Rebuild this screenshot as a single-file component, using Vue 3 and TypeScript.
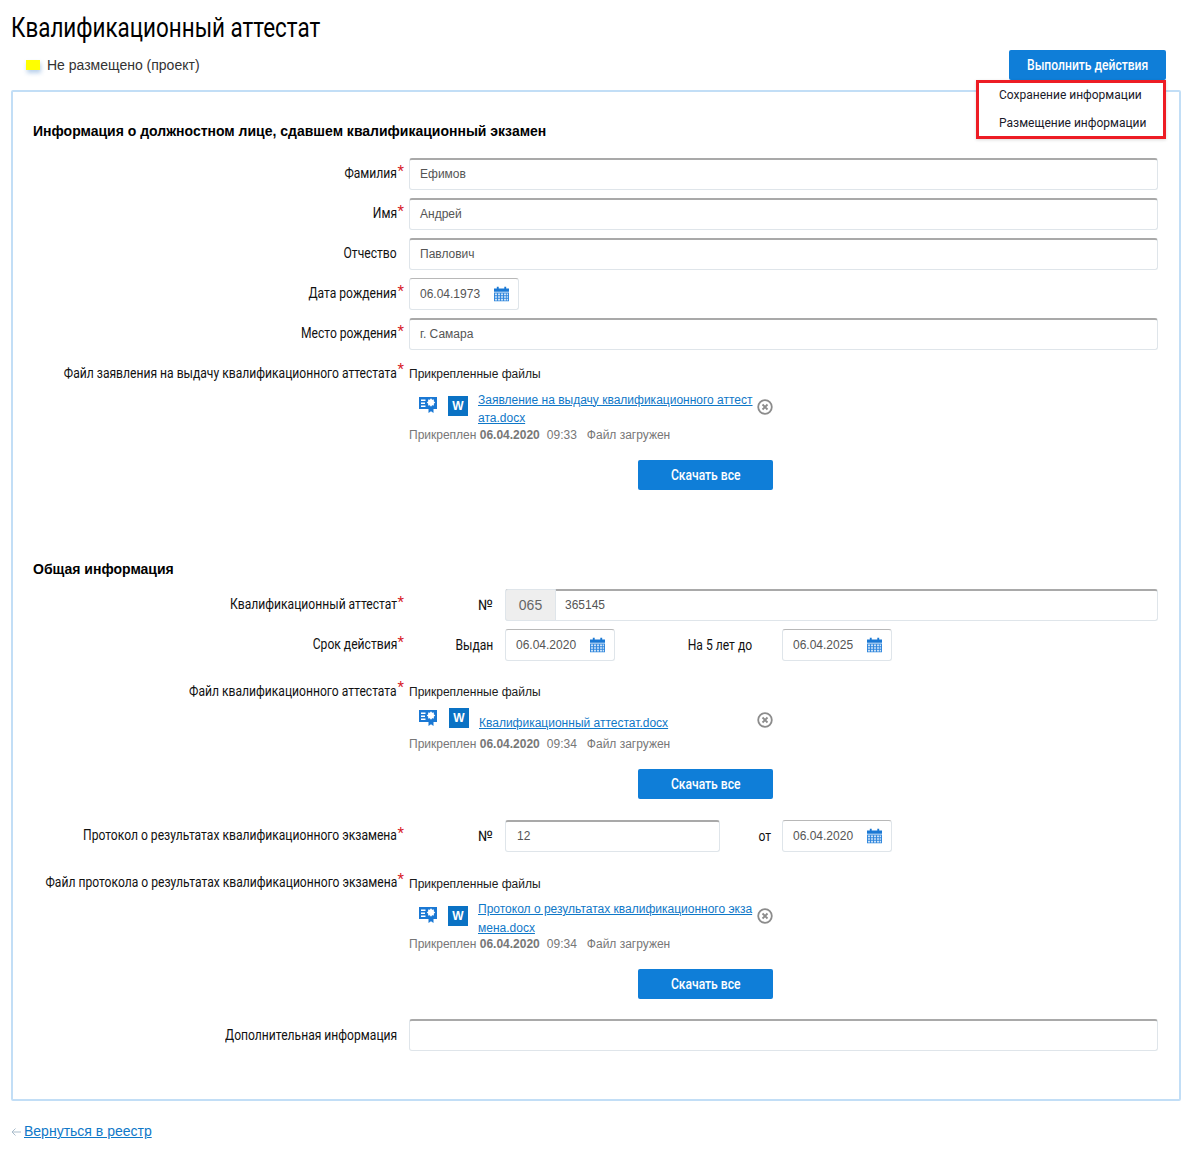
<template>
  <div class="page">
    <h1 class="title"><span class="cn left">Квалификационный аттестат</span></h1>
    <div class="status-bar">
      <div class="status">
        <span class="status-mark"></span>
        <span>Не размещено (проект)</span>
      </div>
      <div class="actions">
        <button class="btn btn-actions"><span class="cn">Выполнить действия</span></button>
        <ul class="menu">
          <li>Сохранение информации</li>
          <li>Размещение информации</li>
        </ul>
      </div>
    </div>

    <div class="panel">
      <h2 class="section-title first">Информация о должностном лице, сдавшем квалификационный экзамен</h2>

      <div class="rows">
        <div class="row">
          <label class="label"><span class="cn right">Фамилия</span><i>*</i></label>
          <div class="input">Ефимов</div>
        </div>
        <div class="row">
          <label class="label"><span class="cn right">Имя</span><i>*</i></label>
          <div class="input">Андрей</div>
        </div>
        <div class="row">
          <label class="label"><span class="cn right">Отчество</span></label>
          <div class="input">Павлович</div>
        </div>
        <div class="row">
          <label class="label"><span class="cn right">Дата рождения</span><i>*</i></label>
          <div class="input date">
            06.04.1973
            <svg class="cal" viewBox="0 0 16 16"><use href="#cal-icon" /></svg>
          </div>
        </div>
        <div class="row">
          <label class="label"><span class="cn right">Место рождения</span><i>*</i></label>
          <div class="input">г. Самара</div>
        </div>
      </div>

      <div class="row file-row first-file">
        <label class="label"><span class="cn right">Файл заявления на выдачу квалификационного аттестата</span><i>*</i></label>
        <div class="files">
          <div class="files-title">Прикрепленные файлы</div>
          <div class="file">
            <svg class="cert" viewBox="0 0 18 17"><use href="#cert-icon" /></svg>
            <span class="word">W</span>
            <a class="file-link">Заявление на выдачу квалификационного аттест<br />ата.docx</a>
            <svg class="remove" viewBox="0 0 16 16"><use href="#remove-icon" /></svg>
          </div>
          <div class="meta">
            Прикреплен <b>06.04.2020</b><span class="time">09:33</span><span class="loaded">Файл загружен</span>
          </div>
          <button class="btn btn-download"><span class="cn">Скачать все</span></button>
        </div>
      </div>

      <h2 class="section-title second">Общая информация</h2>

      <div class="rows">
        <div class="row">
          <label class="label"><span class="cn right">Квалификационный аттестат</span><i>*</i></label>
          <div class="inline">
            <span class="inline-label no">№</span>
            <div class="input number">
              <span class="prefix">065</span>
              <span class="number-value">365145</span>
            </div>
          </div>
        </div>
        <div class="row">
          <label class="label"><span class="cn right">Срок действия</span><i>*</i></label>
          <div class="inline">
            <span class="inline-label no"><span class="cn right">Выдан</span></span>
            <div class="input date">
              06.04.2020
              <svg class="cal" viewBox="0 0 16 16"><use href="#cal-icon" /></svg>
            </div>
            <span class="inline-label until"><span class="cn right">На 5 лет до</span></span>
            <div class="input date">
              06.04.2025
              <svg class="cal" viewBox="0 0 16 16"><use href="#cal-icon" /></svg>
            </div>
          </div>
        </div>
      </div>

      <div class="row file-row second-file">
        <label class="label"><span class="cn right">Файл квалификационного аттестата</span><i>*</i></label>
        <div class="files">
          <div class="files-title">Прикрепленные файлы</div>
          <div class="file single">
            <svg class="cert" viewBox="0 0 18 17"><use href="#cert-icon" /></svg>
            <span class="word">W</span>
            <a class="file-link">Квалификационный аттестат.docx</a>
            <svg class="remove" viewBox="0 0 16 16"><use href="#remove-icon" /></svg>
          </div>
          <div class="meta">
            Прикреплен <b>06.04.2020</b><span class="time">09:34</span><span class="loaded">Файл загружен</span>
          </div>
          <button class="btn btn-download"><span class="cn">Скачать все</span></button>
        </div>
      </div>

      <div class="row protocol-row">
        <label class="label"><span class="cn right">Протокол о результатах квалификационного экзамена</span><i>*</i></label>
        <div class="inline">
          <span class="inline-label no">№</span>
          <div class="input protocol-number">12</div>
          <span class="inline-label from"><span class="cn right">от</span></span>
          <div class="input date">
            06.04.2020
            <svg class="cal" viewBox="0 0 16 16"><use href="#cal-icon" /></svg>
          </div>
        </div>
      </div>

      <div class="row file-row third-file">
        <label class="label"><span class="cn right">Файл протокола о результатах квалификационного экзамена</span><i>*</i></label>
        <div class="files">
          <div class="files-title">Прикрепленные файлы</div>
          <div class="file">
            <svg class="cert" viewBox="0 0 18 17"><use href="#cert-icon" /></svg>
            <span class="word">W</span>
            <a class="file-link">Протокол о результатах квалификационного экза<br />мена.docx</a>
            <svg class="remove" viewBox="0 0 16 16"><use href="#remove-icon" /></svg>
          </div>
          <div class="meta">
            Прикреплен <b>06.04.2020</b><span class="time">09:34</span><span class="loaded">Файл загружен</span>
          </div>
          <button class="btn btn-download"><span class="cn">Скачать все</span></button>
        </div>
      </div>

      <div class="row extra-row">
        <label class="label"><span class="cn right">Дополнительная информация</span></label>
        <div class="input"></div>
      </div>
    </div>

    <div class="back">
      <svg class="back-arrow" viewBox="0 0 10 10">
        <path d="M10 5H1M4.500 1.500L1 5l3.500 3.500" fill="none" stroke="#a9bccb" stroke-width="1" />
      </svg>
      <a class="back-link">Вернуться в реестр</a>
    </div>

    <svg class="defs" width="0" height="0">
      <symbol id="cal-icon" viewBox="0 0 16 16" preserveAspectRatio="none">
        <path d="M0 2h16v3.500H0z" fill="#1a78d4" />
        <path d="M3 0h2v3H3zM11 0h2v3h-2z" fill="#1a78d4" />
        <path d="M0 6.500h16V16H0z" fill="#2f86dc" />
        <path
          d="M1 7.500h2.200v1.800H1zM4.200 7.500h2.200v1.800H4.200zM7.400 7.500h2.200v1.800H7.400zM10.600 7.500h2.200v1.800h-2.200zM13.500 7.500H15v1.800h-1.500zM1 10.300h2.200v1.800H1zM4.200 10.300h2.200v1.800H4.200zM7.400 10.300h2.200v1.800H7.400zM10.600 10.300h2.200v1.800h-2.200zM13.500 10.300H15v1.800h-1.500zM1 13.100h2.200V15H1zM4.200 13.100h2.200V15H4.200zM7.400 13.100h2.200V15H7.400zM10.600 13.100h2.200V15h-2.200zM13.500 13.100H15V15h-1.500z"
          fill="#cfe3f7"
        />
      </symbol>
      <symbol id="cert-icon" viewBox="0 0 18 17">
        <path d="M0 1h18v12H0z" fill="#1a78d4" />
        <path d="M2 3.500h4.500V5H2zM2 6.500h4V8H2zM2 9.500h4.500V11H2z" fill="#fff" />
        <path
          d="M16.200 6.500l-1.430-1.150.2-1.820-1.820.2L12 2.300l-1.150 1.430-1.820-.2.2 1.820L7.800 6.500l1.430 1.150-.2 1.820 1.820-.2L12 10.700l1.150-1.430 1.820.2-.2-1.820z"
          fill="#fff"
        />
        <path d="M9.500 13h5v4L12 15.300 9.500 17z" fill="#1a78d4" />
      </symbol>
      <symbol id="remove-icon" viewBox="0 0 16 16">
        <circle cx="8" cy="8" r="6.800" fill="none" stroke="#8c8c8c" stroke-width="1.800" />
        <path d="M5.500 5.500l5 5M10.500 5.500l-5 5" fill="none" stroke="#8c8c8c" stroke-width="1.800" />
      </symbol>
    </svg>
  </div>
</template>

<script setup lang="ts">
// static page, nothing to drive
</script>

<style>
body {
  background: #fff;
}
</style>

<style scoped>
.page {
  width: 1196px;
  height: 1169px;
  overflow: hidden;
  box-sizing: border-box;
  padding: 13px 15px 0 11px;
  font-family: "Liberation Sans", Arial, sans-serif;
  color: #000;
  background: #fff;
}

.defs {
  position: absolute;
}

/* no condensed face installed, so Roboto gets squeezed */
.cn {
  display: inline-block;
  white-space: nowrap;
  transform: scaleX(0.835);
}

.cn.left {
  transform: scaleX(0.83);
  transform-origin: left center;
}

.cn.right {
  transform-origin: right center;
}

.title {
  margin: 0;
  height: 30px;
  font-family: Roboto, sans-serif;
  font-size: 27px;
  line-height: 30px;
  font-weight: 400;
}

.status-bar {
  display: flex;
  justify-content: space-between;
  align-items: flex-start;
  padding: 7px 15px 0 15px;
  height: 47px;
  box-sizing: border-box;
}

.status {
  display: flex;
  align-items: center;
  gap: 7px;
  height: 30px;
  font-family: "Liberation Sans", sans-serif;
  font-size: 14px;
  color: #333;
}

.status-mark {
  width: 14px;
  height: 10px;
  background: #ff0;
  box-shadow: 1px 3px 4px rgba(100, 150, 210, 0.45);
}

.actions {
  position: relative;
}

.btn {
  display: block;
  border: 0;
  border-radius: 2px;
  background: #0f7ed8;
  color: #fff;
  font-family: Roboto, sans-serif;
  font-size: 14.500px;
  font-weight: 500;
  padding: 0;
}

.btn-actions {
  width: 157px;
  height: 30px;
}

.menu {
  position: absolute;
  z-index: 2;
  top: 30px;
  right: 0;
  width: 190px;
  height: 59px;
  box-sizing: border-box;
  margin: 0;
  padding: 0;
  list-style: none;
  background: #fff;
  border: 3px solid #ed1c24;
  box-shadow: 0 1px 3px rgba(0, 0, 0, 0.15);
  font-family: Roboto, sans-serif;
  font-size: 12px;
  color: #1a1a2a;
}

.menu li {
  padding-left: 20px;
  height: 28px;
  line-height: 24px;
}

.panel {
  box-sizing: border-box;
  height: 1011px;
  padding: 0 21px 0 0;
  border: 2px solid #c2def6;
  border-radius: 2px;
}

.section-title {
  margin: 0;
  padding-left: 20px;
  font-size: 14px;
  line-height: 18px;
  font-weight: 700;
}

.section-title.first {
  margin-top: 30px;
  margin-bottom: 18px;
}

.section-title.second {
  margin-top: 0;
  margin-bottom: 11px;
}

.rows {
  display: flex;
  flex-direction: column;
  gap: 8px;
}

.row {
  display: grid;
  grid-template-columns: 391px 1fr;
  column-gap: 5px;
  align-items: start;
}

.label {
  display: flex;
  justify-content: flex-end;
  height: 32px;
  padding-right: 7px;
  box-sizing: border-box;
  position: relative;
  font-family: Roboto, sans-serif;
  font-size: 14.500px;
  line-height: 32px;
  color: #111;
}

.label i {
  position: absolute;
  right: 0;
  top: -3px;
  font-style: normal;
  color: #d8232a;
  font-size: 15px;
}

.input {
  box-sizing: border-box;
  height: 32px;
  padding: 0 10px 2px;
  display: flex;
  align-items: center;
  background: #fff;
  border: 1px solid #dfe5ea;
  border-top: 2px solid #a9a9a9;
  border-radius: 3px;
  font-family: "Liberation Sans", sans-serif;
  font-size: 12px;
  color: #555;
}

.input.date {
  width: 110px;
  justify-content: space-between;
  padding: 0 9px 0 10px;
  border-top-width: 1px;
  border-top-color: #b8b8b8;
}

.cal {
  width: 15px;
  height: 16px;
  flex: none;
}

.inline {
  display: flex;
  align-items: center;
}

.inline-label {
  display: flex;
  justify-content: flex-end;
  font-family: Roboto, sans-serif;
  font-size: 14.500px;
  color: #111;
  box-sizing: border-box;
}

.inline-label.no {
  width: 85px;
  padding-right: 1px;
  margin-right: 11px;
}

.inline-label.until {
  width: 137px;
  margin-right: 30px;
}

.inline-label.from {
  width: 51px;
  margin-right: 11px;
}

.number {
  flex: 1;
  padding: 0;
  align-items: stretch;
}

.prefix {
  width: 49px;
  display: flex;
  align-items: center;
  justify-content: center;
  margin: -2px 0 -1px -1px;
  background: #eee;
  border: 1px solid #dfe5ea;
  border-radius: 3px 0 0 3px;
  font-size: 14px;
  color: #666;
}

.number-value {
  display: flex;
  align-items: center;
  padding: 0 0 2px 9px;
}

.protocol-number {
  width: 215px;
  padding-left: 11px;
}

.files {
  width: 364px;
}

.files-title {
  font-family: "Liberation Sans", sans-serif;
  font-size: 12px;
  line-height: 16px;
  color: #1a1a1a;
}

.file {
  display: flex;
  align-items: center;
  padding-left: 10px;
  margin-top: 8px;
  height: 36px;
}

.file.single {
  margin-top: 9px;
  height: 26px;
}

.cert {
  width: 18px;
  height: 17px;
  flex: none;
  margin: -7px 11px 0 0;
}

.word {
  width: 20px;
  height: 20px;
  flex: none;
  margin: -4px 10px 0 0;
  background: #0a72c4;
  color: #fff;
  font-family: "Liberation Sans", sans-serif;
  font-weight: 700;
  font-size: 12px;
  line-height: 20px;
  text-align: center;
}

.file.single .cert {
  margin-top: -9px;
}

.file.single .word {
  margin-top: -8px;
  margin-left: 1px;
}

.file.single .file-link {
  width: 273px;
}

.file.single .remove {
  margin-top: -4px;
}

.file-link {
  width: 274px;
  flex: none;
  padding-top: 2px;
  font-family: "Liberation Sans", sans-serif;
  font-size: 12px;
  line-height: 18.500px;
  color: #0f78c8;
  text-decoration: underline;
  white-space: nowrap;
}

.remove {
  width: 16px;
  height: 16px;
  flex: none;
  margin: -2px 0 0 5px;
}

.meta {
  font-family: "Liberation Sans", sans-serif;
  font-size: 12px;
  line-height: 16px;
  margin-top: 1px;
  color: #777;
}

.meta b {
  font-weight: 700;
}

.time {
  margin-left: 7px;
}

.loaded {
  margin-left: 10px;
}

.btn-download {
  width: 135px;
  height: 30px;
  margin: 17px 0 0 229px;
}

.first-file {
  margin-top: 8px;
  height: 202px;
}

.second-file {
  margin-top: 15px;
  height: 129px;
}

.protocol-row {
  margin-top: 15px;
}

.third-file {
  margin-top: 16px;
  height: 129px;
}

.third-file .file {
  margin-top: 8px;
  height: 35px;
}

.third-file .remove {
  margin-top: -3px;
}

.extra-row {
  margin-top: 22px;
}

.extra-row .label {
  line-height: 34px;
}

.file-row .label {
  height: auto;
  line-height: 16px;
  padding-top: 8px;
}

.third-file .label {
  padding-top: 7px;
}

.file-row .label i {
  top: 3px;
}

.file-row .files {
  padding-top: 8px;
}

.back {
  margin-top: 22px;
  display: flex;
  align-items: center;
  font-family: "Liberation Sans", sans-serif;
  font-size: 14px;
}

.back-arrow {
  width: 10px;
  height: 10px;
  margin: 1px 3px 0 0;
  flex: none;
}

.back-link {
  color: #0f78c8;
  text-decoration: underline;
}
</style>
